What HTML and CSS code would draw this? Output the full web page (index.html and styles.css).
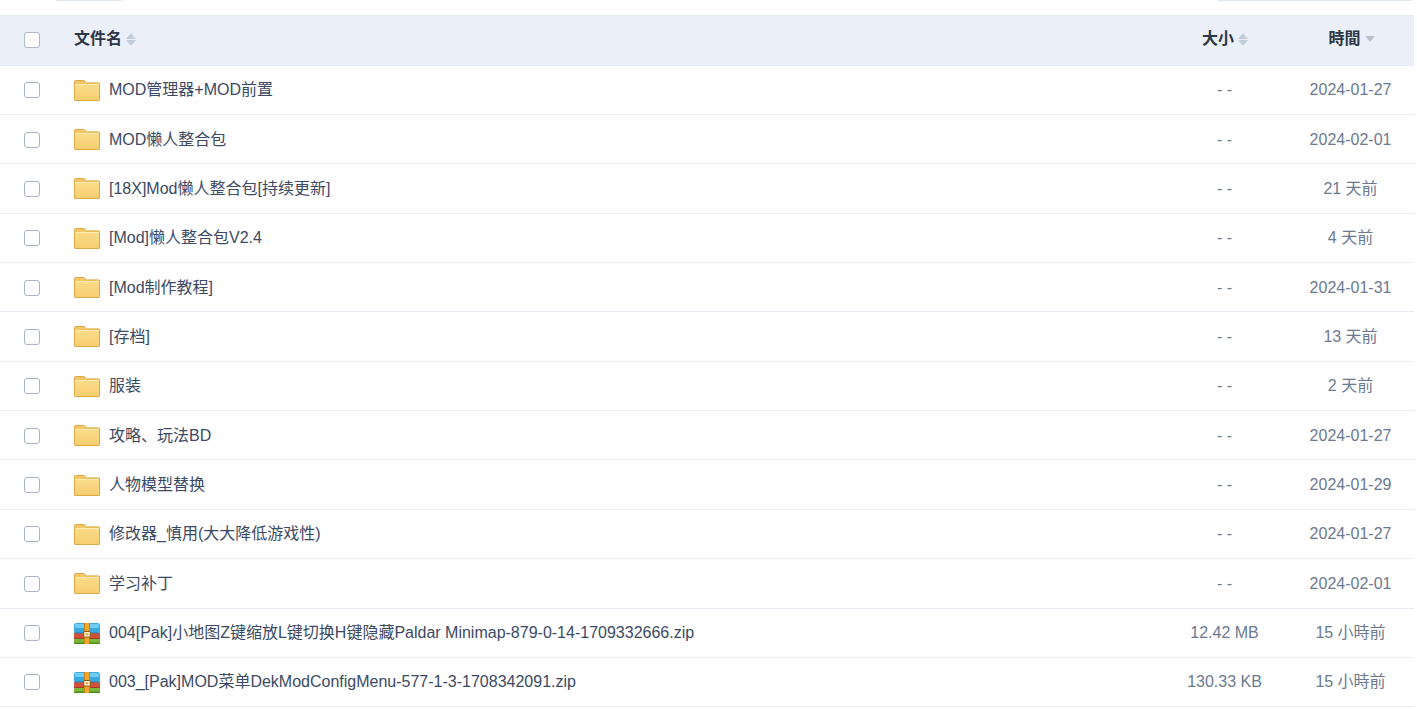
FILE: index.html
```html
<!DOCTYPE html>
<html lang="zh">
<head>
<meta charset="utf-8">
<title>文件列表</title>
<link rel="stylesheet" href="styles.css">
</head>
<body>
<svg class="defs" width="0" height="0" aria-hidden="true">
  <defs>
    <linearGradient id="fg" x1="0" y1="0" x2="0" y2="1">
      <stop offset="0" stop-color="#fbdc8a"/>
      <stop offset="1" stop-color="#f6cd70"/>
    </linearGradient>
    <symbol id="folder" viewBox="0 0 26 21">
      <path d="M.5 4V1.5a1 1 0 0 1 1-1h8.5l2.6 2.4h12a1 1 0 0 1 1 1V19.5a1 1 0 0 1-1 1H1.5a1 1 0 0 1-1-1z" fill="#f2c666" stroke="#dcaa45"/>
      <path d="M1 4.5h24V20H1z" fill="url(#fg)"/>
      <path d="M1 4.5h24" stroke="#fcebb0" stroke-width="1"/>
      <path d="M.5 4v15.5a1 1 0 0 0 1 1h23a1 1 0 0 0 1-1V4" fill="none" stroke="#dcaa45"/>
    </symbol>
    <symbol id="zip" viewBox="0 0 26 21">
      <rect x="0" y="0" width="26" height="10" rx="2.5" fill="#3aa9e0"/>
      <rect x="1" y="1" width="24" height="4" rx="1" fill="#6fcdf3"/>
      <rect x="0" y="10" width="26" height="5.5" fill="#cf5238"/>
      <rect x="0" y="9.4" width="26" height="1" fill="#2c7eb3"/>
      <rect x="0" y="15" width="26" height="6" rx="1.5" fill="#7cb83b"/>
      <rect x="0" y="15" width="26" height="1" fill="#a03c26"/>
      <rect x="0" y="19.6" width="26" height="1.4" rx=".7" fill="#4d8a1f"/>
      <rect x="10.5" y="0" width="5" height="21" fill="#f0a72c"/>
      <rect x="10" y="0" width="1" height="21" fill="#c97f14"/>
      <rect x="15" y="0" width="1" height="21" fill="#c97f14"/>
      <rect x="9.8" y="8.5" width="6.4" height="5.6" rx=".6" fill="#fff3cf" stroke="#8a5a12"/>
      <rect x="11.8" y="10.4" width="2.4" height="1.8" fill="#e8a12c"/>
    </symbol>
  </defs>
</svg>

<div class="top-tabs">
  <span class="tab-mark tab-left"></span>
  <span class="tab-mark tab-right"></span>
</div>

<main class="file-table">
  <div class="row head">
    <span class="c-check"><span class="box"></span></span>
    <span class="c-name head-name">文件名<span class="sort"><i class="up"></i><i class="down"></i></span></span>
    <span class="c-size head-size">大小<span class="sort"><i class="up"></i><i class="down"></i></span></span>
    <span class="c-time head-time">時間<span class="sort"><i class="down deep"></i></span></span>
  </div>

  <div class="row"><span class="c-check"><span class="box"></span></span><span class="c-name"><svg class="ico"><use href="#folder"/></svg>MOD管理器+MOD前置</span><span class="c-size">- -</span><span class="c-time">2024-01-27</span></div>
  <div class="row"><span class="c-check"><span class="box"></span></span><span class="c-name"><svg class="ico"><use href="#folder"/></svg>MOD懒人整合包</span><span class="c-size">- -</span><span class="c-time">2024-02-01</span></div>
  <div class="row"><span class="c-check"><span class="box"></span></span><span class="c-name"><svg class="ico"><use href="#folder"/></svg>[18X]Mod懒人整合包[持续更新]</span><span class="c-size">- -</span><span class="c-time">21 天前</span></div>
  <div class="row"><span class="c-check"><span class="box"></span></span><span class="c-name"><svg class="ico"><use href="#folder"/></svg>[Mod]懒人整合包V2.4</span><span class="c-size">- -</span><span class="c-time">4 天前</span></div>
  <div class="row"><span class="c-check"><span class="box"></span></span><span class="c-name"><svg class="ico"><use href="#folder"/></svg>[Mod制作教程]</span><span class="c-size">- -</span><span class="c-time">2024-01-31</span></div>
  <div class="row"><span class="c-check"><span class="box"></span></span><span class="c-name"><svg class="ico"><use href="#folder"/></svg>[存档]</span><span class="c-size">- -</span><span class="c-time">13 天前</span></div>
  <div class="row"><span class="c-check"><span class="box"></span></span><span class="c-name"><svg class="ico"><use href="#folder"/></svg>服装</span><span class="c-size">- -</span><span class="c-time">2 天前</span></div>
  <div class="row"><span class="c-check"><span class="box"></span></span><span class="c-name"><svg class="ico"><use href="#folder"/></svg>攻略、玩法BD</span><span class="c-size">- -</span><span class="c-time">2024-01-27</span></div>
  <div class="row"><span class="c-check"><span class="box"></span></span><span class="c-name"><svg class="ico"><use href="#folder"/></svg>人物模型替换</span><span class="c-size">- -</span><span class="c-time">2024-01-29</span></div>
  <div class="row"><span class="c-check"><span class="box"></span></span><span class="c-name"><svg class="ico"><use href="#folder"/></svg>修改器_慎用(大大降低游戏性)</span><span class="c-size">- -</span><span class="c-time">2024-01-27</span></div>
  <div class="row"><span class="c-check"><span class="box"></span></span><span class="c-name"><svg class="ico"><use href="#folder"/></svg>学习补丁</span><span class="c-size">- -</span><span class="c-time">2024-02-01</span></div>
  <div class="row"><span class="c-check"><span class="box"></span></span><span class="c-name"><svg class="ico"><use href="#zip"/></svg>004[Pak]小地图Z键缩放L键切换H键隐藏Paldar Minimap-879-0-14-1709332666.zip</span><span class="c-size">12.42 MB</span><span class="c-time">15 小時前</span></div>
  <div class="row"><span class="c-check"><span class="box"></span></span><span class="c-name"><svg class="ico"><use href="#zip"/></svg>003_[Pak]MOD菜单DekModConfigMenu-577-1-3-1708342091.zip</span><span class="c-size">130.33 KB</span><span class="c-time">15 小時前</span></div>
</main>
</body>
</html>
```
FILE: styles.css
```css
* { box-sizing: border-box; }
html, body { margin: 0; height: 100%; overflow: hidden; background: #fff; }
body {
  width: 1414px;
  font: 16px/20px "Liberation Sans", "Noto Sans CJK SC", sans-serif;
  color: #3b4a64;
}
.defs { position: absolute; }
.top-tabs { height: 15px; display: flex; justify-content: space-between; padding: 0 2px 0 56px; }
.tab-mark { height: 1px; background: #dfe7f2; }
.tab-left { width: 66px; }
.tab-right { width: 194px; }
.file-table { display: flex; flex-direction: column; }
.row {
  height: 49.36px;
  flex: none;
  padding-top: .8px;
  display: grid;
  grid-template-columns: 74px 1092px 117px 131px;
  align-items: center;
  border-bottom: 1px solid #e8edf5;
}
.head {
  height: 50.6px;
  padding-top: 0;
  background: #ebf0f8;
  border-top: 1px solid #e4eaf4;
  border-bottom: 1px solid #e4eaf4;
  font-weight: 700;
  color: #2c3646;
}
.c-check { display: flex; padding-left: 24px; }
.box {
  width: 16px; height: 16px;
  border: 1px solid #a9b4c6;
  border-radius: 3px;
  background: #fff;
}
.c-name { display: flex; align-items: center; white-space: nowrap; }
.ico { width: 26px; height: 21px; margin-right: 9px; flex: none; }
.c-size, .c-time { text-align: center; color: #6b7a90; white-space: nowrap; }
.c-time { padding-left: 4px; }
.head .c-name, .head .c-size, .head .c-time { padding-bottom: 2px; }
.head-size, .head-time { display: flex; justify-content: center; align-items: center; color: #2c3646; }
.head-size { padding-left: 1px; }
.head .head-time { padding-left: 6px; }
.sort { display: inline-flex; flex-direction: column; gap: 1px; margin-left: 4px; }
.sort i { display: block; width: 0; height: 0; border-left: 5px solid transparent; border-right: 5px solid transparent; }
.up { border-bottom: 6px solid #c3ccda; }
.down { border-top: 6px solid #c3ccda; }
.sort .deep { border-top-color: #b8c1cf; }
```
